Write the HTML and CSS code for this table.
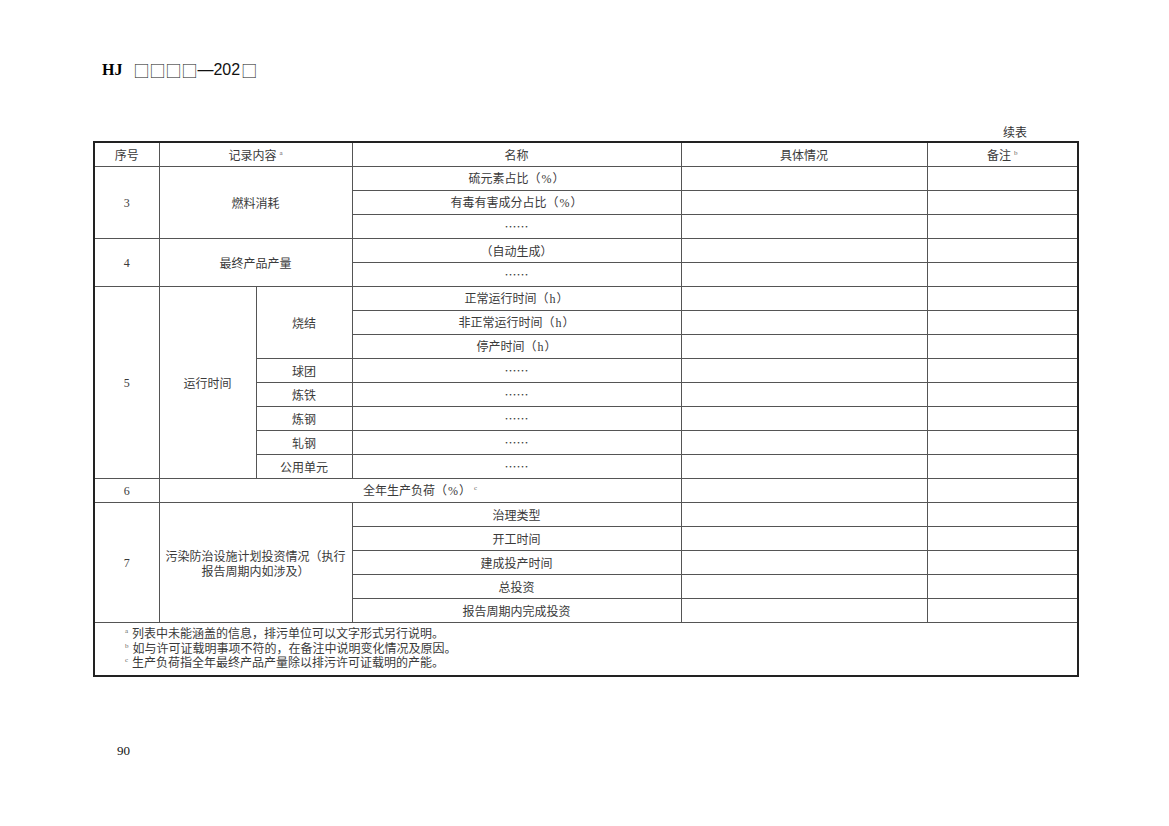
FILE: index.html
```html
<!DOCTYPE html>
<html lang="zh">
<head>
<meta charset="utf-8">
<link rel="stylesheet" href="styles.css">
</head>
<body>
<div class="page">
  <div class="running-head"><span class="hj">HJ</span><span class="code"><span class="box">□□□□</span><span class="yr">—202</span><span class="box">□</span></span></div>
  <div class="cont">续表</div>
  <table class="tbl">
    <colgroup>
      <col class="c1"><col class="c2"><col class="c3"><col class="c4"><col class="c5"><col class="c6">
    </colgroup>
    <tr>
      <td>序号</td>
      <td colspan="2">记录内容<sup>a</sup></td>
      <td>名称</td>
      <td>具体情况</td>
      <td>备注<sup>b</sup></td>
    </tr>
    <tr>
      <td rowspan="3" class="num">3</td>
      <td rowspan="3" colspan="2">燃料消耗</td>
      <td>硫元素占比（<span class="lat">%</span>）</td><td></td><td></td>
    </tr>
    <tr><td>有毒有害成分占比（<span class="lat">%</span>）</td><td></td><td></td></tr>
    <tr><td>……</td><td></td><td></td></tr>
    <tr>
      <td rowspan="2" class="num">4</td>
      <td rowspan="2" colspan="2">最终产品产量</td>
      <td>（自动生成）</td><td></td><td></td>
    </tr>
    <tr><td>……</td><td></td><td></td></tr>
    <tr>
      <td rowspan="8" class="num">5</td>
      <td rowspan="8">运行时间</td>
      <td rowspan="3">烧结</td>
      <td>正常运行时间（<span class="lat">h</span>）</td><td></td><td></td>
    </tr>
    <tr><td>非正常运行时间（<span class="lat">h</span>）</td><td></td><td></td></tr>
    <tr><td>停产时间（<span class="lat">h</span>）</td><td></td><td></td></tr>
    <tr><td>球团</td><td>……</td><td></td><td></td></tr>
    <tr><td>炼铁</td><td>……</td><td></td><td></td></tr>
    <tr><td>炼钢</td><td>……</td><td></td><td></td></tr>
    <tr><td>轧钢</td><td>……</td><td></td><td></td></tr>
    <tr><td>公用单元</td><td>……</td><td></td><td></td></tr>
    <tr>
      <td class="num">6</td>
      <td colspan="3">全年生产负荷（<span class="lat">%</span>）<sup>c</sup></td>
      <td></td><td></td>
    </tr>
    <tr>
      <td rowspan="5" class="num">7</td>
      <td rowspan="5" colspan="2" class="wrap">污染防治设施计划投资情况（执行<br>报告周期内如涉及）</td>
      <td>治理类型</td><td></td><td></td>
    </tr>
    <tr><td>开工时间</td><td></td><td></td></tr>
    <tr><td>建成投产时间</td><td></td><td></td></tr>
    <tr><td>总投资</td><td></td><td></td></tr>
    <tr><td>报告周期内完成投资</td><td></td><td></td></tr>
    <tr class="notes">
      <td colspan="6">
        <div class="note"><sup>a</sup>列表中未能涵盖的信息，排污单位可以文字形式另行说明。</div>
        <div class="note"><sup>b</sup>如与许可证载明事项不符的，在备注中说明变化情况及原因。</div>
        <div class="note"><sup>c</sup>生产负荷指全年最终产品产量除以排污许可证载明的产能。</div>
      </td>
    </tr>
  </table>
  <div class="folio">90</div>
</div>
</body>
</html>
```
FILE: styles.css
```css
html, body {
  margin: 0;
  padding: 0;
  background: #ffffff;
}
.page {
  width: 1169px;
  height: 826px;
  padding: 58px 0 0 93px;
  box-sizing: border-box;
  font-family: "Noto Sans CJK SC", "Liberation Serif", serif;
  color: #222;
}
.running-head {
  display: flex;
  align-items: center;
  height: 24px;
  padding-left: 9px;
}
.hj {
  font-family: "Liberation Serif", serif;
  font-weight: bold;
  font-size: 16px;
  color: #000;
  margin-right: 11px;
}
.code {
  font-size: 16px;
  color: #111;
  display: flex;
  align-items: center;
}
.box {
  font-family: "Noto Sans CJK SC", sans-serif;
  font-weight: 300;
  line-height: 20px;
}
.yr {
  font-family: "Liberation Sans", sans-serif;
  line-height: 20px;
  margin: 0 1px 0 0;
}
.cont {
  width: 934px;
  text-align: right;
  margin-top: 41px;
  font-size: 12px;
  line-height: 18px;
  height: 18px;
  color: #333;
}
.tbl {
  border-collapse: collapse;
  table-layout: fixed;
  width: 984px;
  border: 2px solid #222;
  font-size: 12px;
  color: #3a3a3a;
}
.c1 { width: 65px; }
.c2 { width: 97px; }
.c3 { width: 96px; }
.c4 { width: 329px; }
.c5 { width: 246px; }
.c6 { width: 151px; }
.tbl td {
  border: 1px solid #555;
  height: 23px;
  padding: 0;
  text-align: center;
  vertical-align: middle;
  line-height: 16px;
}
.tbl td.num {
  font-family: "Liberation Serif", serif;
  font-size: 12px;
}
.lat {
  font-family: "Liberation Serif", serif;
  margin: 0 1px;
}
.tbl td.wrap {
  line-height: 15px;
}
.tbl sup {
  font-family: "Liberation Serif", serif;
  font-size: 7px;
  vertical-align: top;
  position: relative;
  top: -2px;
  margin-left: 3px;
  color: #666;
}
.notes td {
  height: 49px;
  text-align: left;
  padding: 3px 0 0 30px;
  vertical-align: top;
  border-top: 1px solid #555;
}
.note {
  line-height: 14.5px;
  font-size: 12px;
  color: #3a3a3a;
}
.note sup {
  font-size: 7px;
  margin-left: 0;
  margin-right: 4px;
}
.folio {
  margin-top: 66px;
  padding-left: 24px;
  font-family: "Liberation Serif", serif;
  font-size: 13px;
  color: #111;
}
```
